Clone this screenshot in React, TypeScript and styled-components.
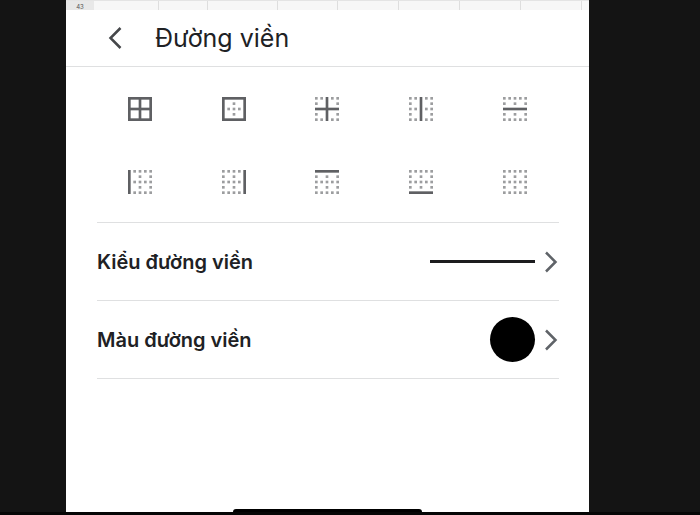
import React from 'react';
import styled, { createGlobalStyle } from 'styled-components';

const GlobalStyle = createGlobalStyle`
  * { box-sizing: border-box; }
  body {
    margin: 0;
    background: #141414;
    font-family: Inter, Roboto, sans-serif;
    color: #202124;
  }
  button {
    border: 0;
    padding: 0;
    background: none;
    font: inherit;
    color: inherit;
    cursor: pointer;
  }
  svg { display: block; }
`;

const Page = styled.div`
  display: grid;
  grid-template-columns: 66fr 523fr 111fr;
  min-height: 100vh;
  border-bottom: 3px solid #060606;
`;

const Panel = styled.main`
  grid-column: 2;
  display: flex;
  flex-direction: column;
  background: #fff;
`;

const SheetStrip = styled.div`
  display: grid;
  grid-template-columns: 28fr 65fr 49fr 70fr 61fr 61fr 61fr 61fr 61fr 7fr;
  height: 10px;
  overflow: hidden;
  border-top: 1px solid #e4e4e4;
  background: #f7f7f7;
`;

const SheetCell = styled.div`
  border-right: 1px solid #dedede;
  &:last-child { border-right: 0; }
`;

const RowNumber = styled.div`
  background: #e8e8e8;
  color: #555;
  font-size: 6px;
  line-height: 12px;
  text-align: center;
`;

const Header = styled.header`
  display: flex;
  align-items: center;
  gap: 32px;
  height: 57px;
  padding-left: 42px;
  border-bottom: 1px solid #dfe0e1;
`;

const BackButton = styled.button`
  color: #45474a;
`;

const Title = styled.h1`
  margin: 0;
  font-size: 25px;
  font-weight: 400;
  line-height: 32px;
`;

const BorderGrid = styled.div`
  display: grid;
  grid-template-columns: repeat(5, 1fr);
  padding: 5px 27px 4px;
`;

const BorderButton = styled.button`
  display: flex;
  align-items: center;
  justify-content: center;
  height: 73px;
`;

const Options = styled.div`
  margin: 0 30px 0 31px;
  border-top: 1px solid #dfe0e1;
`;

const OptionRow = styled.button`
  display: flex;
  align-items: center;
  gap: 8px;
  width: 100%;
  height: 78px;
  border-bottom: 1px solid #dfe0e1;
  text-align: left;
  color: #5f6368;
`;

const OptionLabel = styled.span`
  flex: 1;
  color: #202124;
  font-size: 20px;
  font-weight: 600;
  line-height: 28px;
`;

const LineSample = styled.span`
  width: 105px;
  height: 3px;
  background: #1c1c1e;
`;

const ColorSample = styled.span`
  width: 45px;
  height: 45px;
  border-radius: 50%;
  background: #000;
`;

const HomeIndicator = styled.div`
  width: 36%;
  height: 3px;
  margin: auto auto 0;
  border-radius: 3px 3px 0 0;
  background: #000;
`;

type Segment = [x: number, y: number, width: number, height: number];

const LEFT: Segment = [0, 0, 2, 18];
const RIGHT: Segment = [16, 0, 2, 18];
const TOP: Segment = [0, 0, 18, 2];
const BOTTOM: Segment = [0, 16, 18, 2];
const VERTICAL: Segment = [8, 0, 2, 18];
const HORIZONTAL: Segment = [0, 8, 18, 2];

const borderKinds: { label: string; lines: Segment[] }[] = [
  { label: 'Tất cả đường viền', lines: [LEFT, RIGHT, TOP, BOTTOM, VERTICAL, HORIZONTAL] },
  { label: 'Đường viền ngoài', lines: [LEFT, RIGHT, TOP, BOTTOM] },
  { label: 'Đường viền trong', lines: [VERTICAL, HORIZONTAL] },
  { label: 'Đường viền dọc', lines: [VERTICAL] },
  { label: 'Đường viền ngang', lines: [HORIZONTAL] },
  { label: 'Đường viền trái', lines: [LEFT] },
  { label: 'Đường viền phải', lines: [RIGHT] },
  { label: 'Đường viền trên', lines: [TOP] },
  { label: 'Đường viền dưới', lines: [BOTTOM] },
  { label: 'Không có đường viền', lines: [] },
];

const steps = [0, 4, 8, 12, 16];
const dots = steps
  .flatMap((y) => steps.map((x) => ({ x, y })))
  .filter(({ x, y }) => x % 8 === 0 || y % 8 === 0);

function BorderIcon({ lines }: { lines: Segment[] }) {
  const covered = (x: number, y: number) =>
    lines.some(([lx, ly, w, h]) => x >= lx && x < lx + w && y >= ly && y < ly + h);
  return (
    <svg width="24" height="24" viewBox="0 0 18 18" aria-hidden="true">
      {dots
        .filter(({ x, y }) => !covered(x, y))
        .map(({ x, y }) => (
          <rect key={`${x}-${y}`} x={x} y={y} width="2" height="2" fill="#9c9d9f" />
        ))}
      {lines.map(([x, y, width, height]) => (
        <rect key={`${x}-${y}-${width}`} x={x} y={y} width={width} height={height} fill="#5f6063" />
      ))}
    </svg>
  );
}

function Chevron() {
  return (
    <svg width="16" height="24" viewBox="0 0 16 24" fill="none" stroke="currentColor" strokeWidth="2.5" aria-hidden="true">
      <path d="M3 2.5 12.5 12 3 21.5" />
    </svg>
  );
}

export default function App() {
  return (
    <>
      <GlobalStyle />
      <Page>
        <Panel>
          <SheetStrip>
            <RowNumber>43</RowNumber>
            {Array.from({ length: 9 }, (_, i) => (
              <SheetCell key={i} />
            ))}
          </SheetStrip>
          <Header>
            <BackButton type="button" aria-label="Quay lại">
              <svg width="15" height="24" viewBox="0 0 15 24" fill="none" stroke="currentColor" strokeWidth="2.5" aria-hidden="true">
                <path d="M12.5 2 2.5 12l10 10" />
              </svg>
            </BackButton>
            <Title>Đường viền</Title>
          </Header>
          <BorderGrid>
            {borderKinds.map(({ label, lines }) => (
              <BorderButton key={label} type="button" aria-label={label}>
                <BorderIcon lines={lines} />
              </BorderButton>
            ))}
          </BorderGrid>
          <Options>
            <OptionRow type="button">
              <OptionLabel>Kiểu đường viền</OptionLabel>
              <LineSample />
              <Chevron />
            </OptionRow>
            <OptionRow type="button">
              <OptionLabel>Màu đường viền</OptionLabel>
              <ColorSample />
              <Chevron />
            </OptionRow>
          </Options>
          <HomeIndicator />
        </Panel>
      </Page>
    </>
  );
}
